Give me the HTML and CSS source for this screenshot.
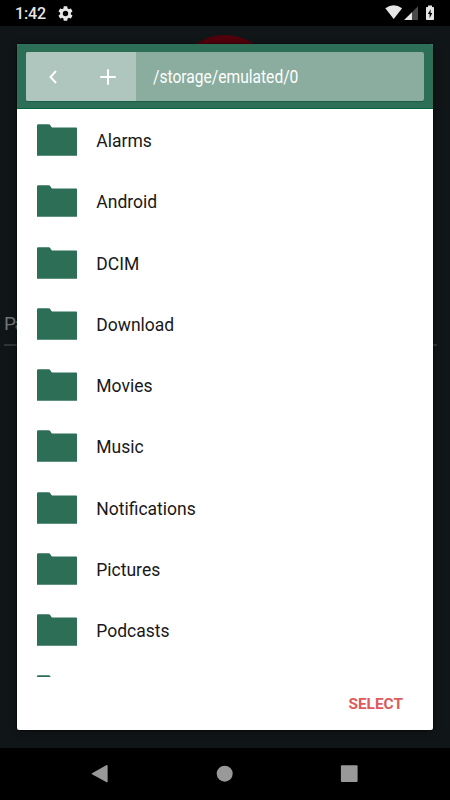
FILE: index.html
```html
<!DOCTYPE html>
<html lang="en">
<head>
<meta charset="utf-8">
<title>Choose folder</title>
<link rel="stylesheet" href="styles.css">
</head>
<body>
<div class="screen">
  <header class="status">
    <span class="clock">1:42</span>
    <svg class="gear" viewBox="2 2 20 20"><path d="M19.14 12.94c.04-.3.06-.61.06-.94 0-.32-.02-.64-.07-.94l2.03-1.58a.49.49 0 0 0 .12-.61l-1.92-3.32a.488.488 0 0 0-.59-.22l-2.39.96c-.5-.38-1.03-.7-1.62-.94l-.36-2.54a.484.484 0 0 0-.48-.41h-3.84c-.24 0-.43.17-.47.41l-.36 2.54c-.59.24-1.13.57-1.62.94l-2.39-.96c-.22-.08-.47 0-.59.22L2.74 8.87c-.12.21-.08.47.12.61l2.03 1.58c-.05.3-.09.63-.09.94s.02.64.07.94l-2.03 1.58a.49.49 0 0 0-.12.61l1.92 3.32c.12.22.37.29.59.22l2.39-.96c.5.38 1.03.7 1.62.94l.36 2.54c.05.24.24.41.48.41h3.84c.24 0 .44-.17.47-.41l.36-2.54c.59-.24 1.13-.56 1.62-.94l2.39.96c.22.08.47 0 .59-.22l1.92-3.32c.12-.22.07-.47-.12-.61zM12 15.6A3.6 3.6 0 1 1 12 8.400a3.600 3.600 0 0 1 0 7.200z"/></svg>
    <svg class="signals" viewBox="0 0 50 16">
      <path d="M.3 3.200Q8.700-2.600 17.100 3.200L8.700 14z"/>
      <path class="dim" d="M33 1.200V15H19.200z"/>
      <path d="M27 7.200V15H19.200z"/>
      <path fill-rule="evenodd" d="M43 .4h4V2h1.200q.8 0 .8.800v11.400q0 .8-.8.800h-6.400q-.8 0-.8-.8V2.800q0-.8.8-.8H43zM45.600 4.200L42.900 9h1.700v4.200L47.300 8h-1.700z"/>
    </svg>
  </header>
  <main class="app">
    <div class="logo"></div>
    <div class="field">Path</div>
    <section class="dialog">
      <div class="toolbar">
        <div class="pathbar">
          <div class="actions">
            <svg class="back" viewBox="0 0 8 14"><path d="M7 1L1.500 7L7 13"/></svg>
            <svg class="add" viewBox="0 0 16 16"><path d="M8 .2V15.800M.2 8H15.800"/></svg>
          </div>
          <span class="path">/storage/emulated/0</span>
        </div>
      </div>
      <svg class="defs"><symbol id="folder" viewBox="0 0 40 32"><path d="M0 1.500Q0 .3 1.200.3H11.600Q12.800.3 13.500 1.500L14.400 2.900Q14.900 3.600 16 3.600H39.200Q40 3.600 40 4.400V31.700H0z"/></symbol></svg>
      <ul class="list">
        <li><svg><use href="#folder"/></svg><span>Alarms</span></li>
        <li><svg><use href="#folder"/></svg><span>Android</span></li>
        <li><svg><use href="#folder"/></svg><span>DCIM</span></li>
        <li><svg><use href="#folder"/></svg><span>Download</span></li>
        <li><svg><use href="#folder"/></svg><span>Movies</span></li>
        <li><svg><use href="#folder"/></svg><span>Music</span></li>
        <li><svg><use href="#folder"/></svg><span>Notifications</span></li>
        <li><svg><use href="#folder"/></svg><span>Pictures</span></li>
        <li><svg><use href="#folder"/></svg><span>Podcasts</span></li>
        <li><svg><use href="#folder"/></svg></li>
      </ul>
      <footer class="buttons"><span>SELECT</span></footer>
    </section>
  </main>
  <nav class="nav">
    <svg viewBox="0 0 18 20"><path d="M1 9.200L15.200 1.300Q16.600.6 16.600 2V17.400Q16.600 18.800 15.200 18.100L1 10.200Q.2 9.700 1 9.200z"/></svg>
    <svg viewBox="0 0 18 20"><circle cx="9.700" cy="9.700" r="8"/></svg>
    <svg viewBox="0 0 18 20"><rect x=".9" y="1.300" width="16.700" height="16.700" rx="1"/></svg>
  </nav>
</div>
</body>
</html>
```
FILE: styles.css
```css
* { box-sizing: border-box; }
body { margin: 0; font-family: Roboto, "Liberation Sans", sans-serif; }
.screen { width: 450px; height: 800px; display: flex; flex-direction: column; background: #000; overflow: hidden; }
.status { height: 26px; flex: none; display: flex; align-items: center; padding: 0 15px 0 15px; color: #e6e6e6; }
.status svg { fill: #e6e6e6; }
.clock { font-size: 16px; font-weight: 500; line-height: 26px; letter-spacing: -.1px; padding-top: 2px; width: 43px; }
.gear { width: 15px; height: 15px; }
.signals { width: 50px; height: 16px; margin-left: auto; }
.signals .dim { fill: #4a4a4a; }
.app { position: relative; height: 722px; flex: none; overflow: hidden; background: #101517; padding: 17.500px 17px 0; }
.logo { position: absolute; left: 173px; top: 9px; width: 104px; height: 104px; border-radius: 50%; background: #50000b; }
.field { position: absolute; left: 4px; top: 286px; width: 433px; height: 33.500px; border-bottom: 2px solid #303435; color: #707475; font-size: 19px; letter-spacing: -1.400px; line-height: 23px; }
.dialog { position: relative; width: 416px; height: 686.500px; display: flex; flex-direction: column; background: #fff; border-radius: 2px; overflow: hidden; box-shadow: 0 0 2px #000, 0 3px 8px rgba(0,0,0,.25); }
.toolbar { height: 65.500px; flex: none; padding: 8.500px 9px; background: #2d6e56; border-bottom: 1px solid #00663f; }
.pathbar { height: 49px; display: flex; align-items: center; background: #8aada0; border-radius: 2px; overflow: hidden; box-shadow: 0 1px 0 #1c5f46; }
.actions { width: 109.500px; height: 49px; display: flex; align-items: center; padding-left: 23px; background: #aec6bd; }
.actions svg { fill: none; stroke: #fff; stroke-width: 2; }
.back { width: 8px; height: 14px; }
.add { width: 16px; height: 16px; margin-left: 43px; }
.path { margin-left: 17.500px; color: #fff; font-size: 18px; line-height: 24px; white-space: nowrap; transform: scaleX(.866); transform-origin: left; padding-top: 1px; }
.defs { display: none; }
.list { height: 568px; flex: none; overflow: hidden; margin: 0; padding: .4px 0 0 20px; list-style: none; }
.list li { height: 61.250px; display: flex; align-items: center; }
.list svg { width: 40px; height: 32px; fill: #2d6e56; }
.list span { margin-left: 19.300px; color: #181818; font-size: 17.500px; font-weight: 400; line-height: 24px; padding-top: 2px; }
.buttons { flex: 1; display: flex; justify-content: flex-end; padding: 16px 30px 0 0; color: #dc5b5b; font-size: 15.400px; line-height: 22px; font-weight: 700; }
.nav { height: 52px; flex: none; display: flex; justify-content: space-between; align-items: center; padding: 0 92px 0 90.500px; }
.nav svg { width: 18px; height: 20px; fill: #999; }
```
